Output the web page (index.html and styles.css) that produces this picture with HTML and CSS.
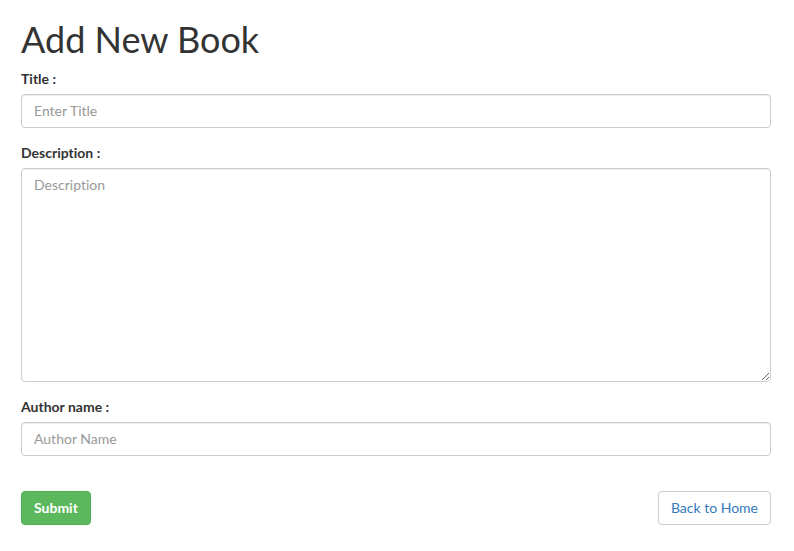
FILE: index.html
```html
<!DOCTYPE html>
<html lang="en">
<head>
<meta charset="utf-8">
<meta name="viewport" content="width=device-width, initial-scale=1">
<title>Add New Book</title>
<link rel="stylesheet" href="styles.css">
</head>
<body>
<main class="page">
  <h1 class="page-title">Add New Book</h1>
  <form class="book-form">
    <div class="field">
      <label for="title">Title :</label>
      <input class="control" id="title" type="text" placeholder="Enter Title">
    </div>
    <div class="field">
      <label for="description">Description :</label>
      <textarea class="control" id="description" rows="10" placeholder="Description"></textarea>
    </div>
    <div class="field">
      <label for="author">Author name :</label>
      <input class="control" id="author" type="text" placeholder="Author Name">
    </div>
    <div class="actions">
      <button class="btn btn-submit" type="submit">Submit</button>
      <a class="btn btn-back" href="#">Back to Home</a>
    </div>
  </form>
</main>
</body>
</html>
```

FILE: styles.css
```css
* {
  box-sizing: border-box;
}

body {
  margin: 0;
  background: #fff;
  color: #333;
  font: 14px/20px Lato, "Liberation Sans", sans-serif;
  font-variant-ligatures: none;
}

.page {
  padding: 20px 23px 26px 21px;
}

.page-title {
  margin: 0 0 11px;
  font-size: 36px;
  line-height: 38px;
  font-weight: 400;
}

.field {
  margin-bottom: 15px;
}

label {
  display: block;
  margin-bottom: 5px;
  font-weight: 700;
}

.control {
  display: block;
  width: 100%;
  height: 34px;
  padding: 5px 12px 7px;
  border: 1px solid #ccc;
  border-radius: 4px;
  background: #fff;
  box-shadow: inset 0 1px 1px rgba(0, 0, 0, 0.075);
  color: #555;
  font: inherit;
  font-variant-ligatures: none;
}

textarea.control {
  height: auto;
  padding: 6px 12px;
  resize: vertical;
}

.control::placeholder {
  color: #999;
  opacity: 1;
}

.actions {
  display: flex;
  justify-content: space-between;
  margin-top: 35px;
}

.btn {
  padding: 6px 12px;
  border: 1px solid #ccc;
  border-radius: 4px;
  font: inherit;
  text-decoration: none;
  cursor: pointer;
}

.btn-submit {
  border-color: #4cae4c;
  background: #5cb85c;
  color: #fff;
  font-weight: 700;
}

.btn-back {
  background: #fff;
  color: #337ab7;
}
```
